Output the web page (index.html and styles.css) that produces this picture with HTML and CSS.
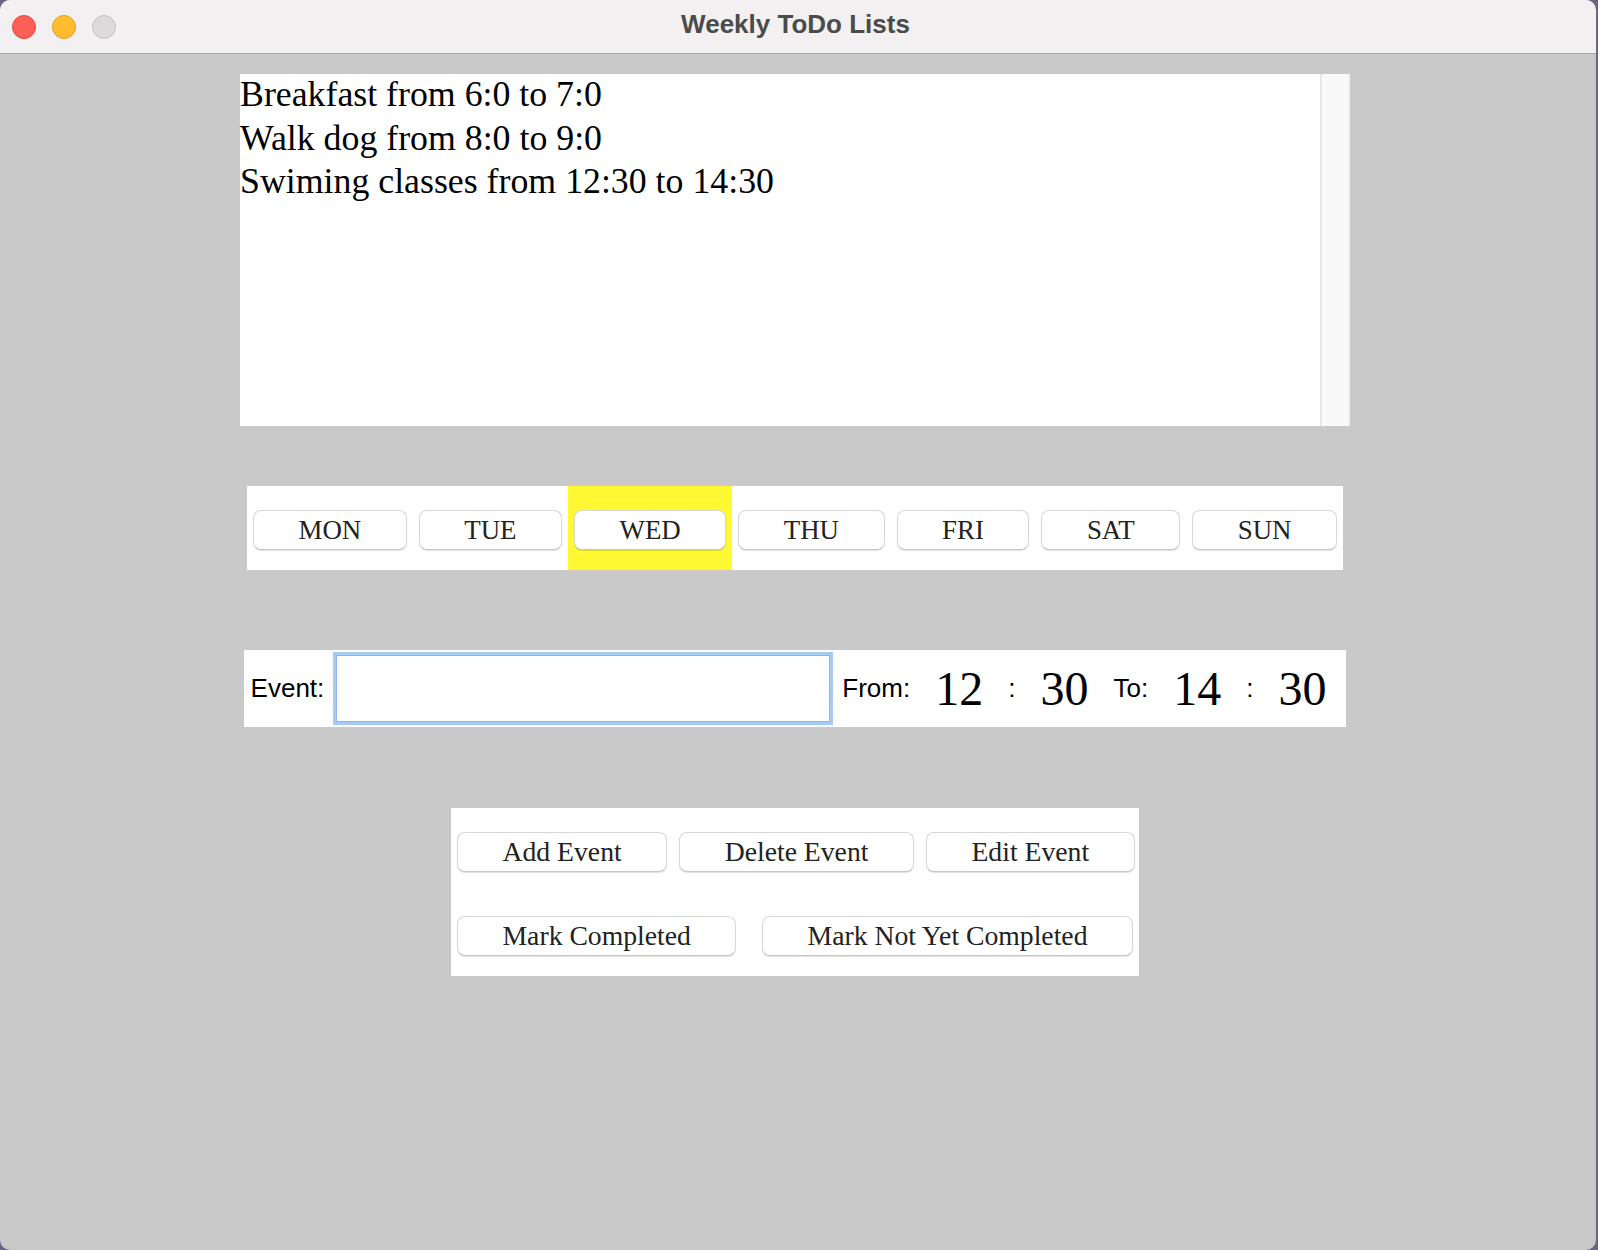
FILE: index.html
```html
<!DOCTYPE html>
<html lang="en">
<head>
<meta charset="utf-8">
<title>Weekly ToDo Lists</title>
<link rel="stylesheet" href="styles.css">
</head>
<body>
<div class="window">
  <div class="titlebar">
    <div class="lights">
      <span class="light red"></span>
      <span class="light yellow"></span>
      <span class="light gray"></span>
    </div>
    <div class="title">Weekly ToDo Lists</div>
    <div class="spacer"></div>
  </div>
  <div class="main">
    <div class="textarea">
      <div class="lines">
        <div>Breakfast from 6:0 to 7:0</div>
        <div>Walk dog from 8:0 to 9:0</div>
        <div>Swiming classes from 12:30 to 14:30</div>
      </div>
      <div class="gutter"></div>
    </div>

    <div class="daybar">
      <div class="slot"><button class="btn day">MON</button></div>
      <div class="slot"><button class="btn day">TUE</button></div>
      <div class="slot selected"><button class="btn day">WED</button></div>
      <div class="slot"><button class="btn day">THU</button></div>
      <div class="slot"><button class="btn day">FRI</button></div>
      <div class="slot"><button class="btn day">SAT</button></div>
      <div class="slot"><button class="btn day">SUN</button></div>
    </div>

    <div class="event-panel">
      <span class="label">Event:</span>
      <div class="event-input"></div>
      <div class="times">
        <span class="label">From:</span>
        <span class="num">12</span>
        <span class="label">:</span>
        <span class="num">30</span>
        <span class="label">To:</span>
        <span class="num">14</span>
        <span class="label">:</span>
        <span class="num">30</span>
      </div>
    </div>

    <div class="actions">
      <div class="row">
        <div class="slot"><button class="btn">Add Event</button></div>
        <div class="slot"><button class="btn">Delete Event</button></div>
        <div class="slot"><button class="btn">Edit Event</button></div>
      </div>
      <div class="row">
        <div class="slot"><button class="btn">Mark Completed</button></div>
        <div class="slot"><button class="btn">Mark Not Yet Completed</button></div>
      </div>
    </div>
  </div>
</div>
</body>
</html>
```

FILE: styles.css
```css
html, body {
  margin: 0;
  padding: 0;
}

body {
  background: #6f6286;
  width: 1598px;
  height: 1250px;
  overflow: hidden;
}

.window {
  width: 1596px;
  height: 1250px;
  background: #c9c9c9;
  border-radius: 10px;
  overflow: hidden;
}

.titlebar {
  height: 53px;
  border-bottom: 1px solid #a8a8a8;
  background: #f2f0f1;
  display: grid;
  grid-template-columns: 1fr auto 1fr;
  align-items: center;
  padding-right: 5px;
}

.lights {
  display: flex;
  gap: 16px;
  padding-left: 12px;
}

.light {
  width: 24px;
  height: 24px;
  border-radius: 50%;
  box-sizing: border-box;
}

.light.red {
  background: #fe5f57;
  border: 1px solid #e2463f;
}

.light.yellow {
  background: #febc2e;
  border: 1px solid #e0a123;
}

.light.gray {
  background: #dcdadb;
  border: 1px solid #c4c2c3;
}

.title {
  font-family: "Liberation Sans", Arial, sans-serif;
  font-weight: bold;
  font-size: 26px;
  color: #4b4b4b;
  margin-bottom: 4px;
}

.main {
  width: 1590px;
  display: flex;
  flex-direction: column;
  align-items: center;
}

.textarea {
  margin-top: 20px;
  width: 1110px;
  height: 352px;
  background: #ffffff;
  display: flex;
}

.lines {
  flex: 1;
  font-family: "Liberation Serif", "Times New Roman", serif;
  font-size: 35.8px;
  line-height: 43.5px;
  color: #000;
  margin-top: -1px;
}

.gutter {
  width: 26px;
  background: #f9f9f9;
  border-left: 2px solid #e7e7e7;
  border-right: 2px solid #f1f1f1;
}

.daybar {
  margin-top: 60px;
  background: #ffffff;
  display: flex;
}

.slot {
  padding: 24px 6px 20px;
}

.slot.selected {
  background: #fff833;
}

.btn {
  display: block;
  height: 40px;
  box-sizing: border-box;
  margin: 0;
  padding: 0 44.5px;
  background: #ffffff;
  border: 1px solid #d8d8d8;
  border-bottom-color: #c6c6c6;
  border-radius: 8px;
  box-shadow: 0 1px 1px rgba(0, 0, 0, 0.12);
  font-family: "Liberation Serif", "Times New Roman", serif;
  font-size: 27.7px;
  color: #222222;
  white-space: nowrap;
}

.btn.day {
  font-size: 26.9px;
}

.event-panel {
  margin-top: 80px;
  height: 77px;
  background: #ffffff;
  display: flex;
  align-items: center;
  padding: 0 20px 0 7px;
}

.label {
  font-family: "Liberation Sans", Arial, sans-serif;
  font-size: 26px;
  color: #000;
}

.event-input {
  margin-left: 9px;
  width: 500px;
  height: 73px;
  box-sizing: border-box;
  background: #fff;
  border: 3px solid #a6ccf4;
  box-shadow: inset 0 0 0 1px #8bb8e8;
}

.times {
  margin-left: 9px;
  display: flex;
  align-items: center;
  gap: 25px;
}

.num {
  font-family: "Liberation Serif", "Times New Roman", serif;
  font-size: 48px;
  color: #000;
}

.actions {
  margin-top: 81px;
  width: 688px;
  background: #ffffff;
}

.row {
  display: flex;
  justify-content: space-between;
}
```
